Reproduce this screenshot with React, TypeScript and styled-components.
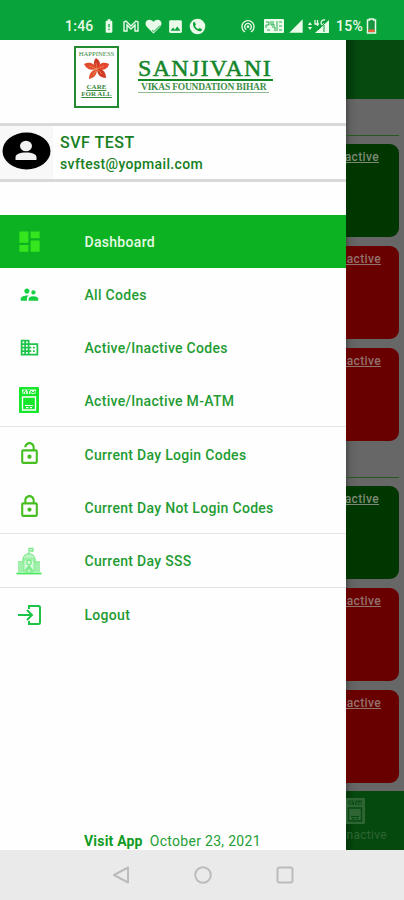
import React from "react";
import styled, { createGlobalStyle } from "styled-components";
import {
  MdDashboard,
  MdSupervisorAccount,
  MdDomain,
  MdOutlineLockOpen,
  MdOutlineLock,
  MdWifiTethering,
  MdImage,
  MdSignalCellular4Bar,
  MdBatteryAlert,
} from "react-icons/md";

const GlobalStyle = createGlobalStyle`
  * { box-sizing: border-box; }
  body { margin: 0; background: #fff; font-family: Roboto, "Liberation Sans", sans-serif; }
`;

const Phone = styled.div`
  width: 404px;
  height: 900px;
  display: grid;
  grid-template-rows: 39.5px 810.5px 50px;
  overflow: hidden;
`;

const StatusBar = styled.header`
  background: #09a33b;
  color: #e9fbe9;
  display: flex;
  align-items: center;
  padding: 13px 0 0 65px;
  svg { display: block; flex: none; }
`;
const StatusText = styled.span<{ $w: number }>`
  display: block;
  width: ${(p) => p.$w}px;
  font-size: 14px;
  font-weight: 500;
  line-height: 16px;
  letter-spacing: 0.25px;
  white-space: nowrap;
`;
const StatusIcon = styled.span<{ $gap: number }>`
  margin-left: ${(p) => p.$gap}px;
`;

const Main = styled.main`
  display: flex;
  min-height: 0;
`;
const Drawer = styled.aside`
  width: 346px;
  flex: none;
  background: #fefefe;
  display: flex;
  flex-direction: column;
`;
const Brand = styled.div`
  height: 83px;
  display: flex;
  padding: 6px 0 0 74px;
  gap: 19px;
`;
const Emblem = styled.div`
  width: 45px;
  height: 62px;
  border: 2px solid #238a32;
  display: flex;
  flex-direction: column;
  align-items: center;
  font-family: "Liberation Serif", serif;
  color: #3b8a42;
  svg { display: block; margin-top: 1px; }
`;
const EmblemText = styled.span`
  font-size: 6.7px;
  line-height: 7px;
  margin-top: 2px;
  white-space: nowrap;
`;
const Motto = styled.span`
  margin-top: 3px;
  font-size: 7px;
  line-height: 7px;
  text-align: center;
  text-decoration: underline;
  white-space: nowrap;
  font-weight: bold;
`;
const Wordmark = styled.div`
  padding-top: 9px;
  width: 135px;
  font-family: "Liberation Serif", serif;
  color: #14862a;
  white-space: nowrap;
`;
const BrandName = styled.div`
  font-size: 24px;
  line-height: 26px;
  height: 26px;
  letter-spacing: 1.3px;
  border-bottom: 2px solid #14862a;
  -webkit-text-stroke: 0.5px #14862a;
`;
const BrandSub = styled.div`
  font-size: 9.5px;
  font-weight: bold;
  line-height: 12px;
  height: 12px;
  width: 131px;
  padding-left: 3px;
  letter-spacing: -0.22px;
  color: #3f8e48;
  border-bottom: 1px solid #8dba90;
`;

const Profile = styled.section`
  height: 59.5px;
  border: solid #d9d9d9;
  border-width: 3px 0;
  display: flex;
`;
const AvatarBox = styled.div`
  width: 53px;
  background: #f8f8f8;
  display: flex;
  align-items: flex-start;
  justify-content: center;
  padding-top: 6px;
  svg { display: block; }
`;
const Person = styled.div`
  padding: 6px 0 0 7px;
  font-weight: 500;
  color: #17801f;
  white-space: nowrap;
`;
const PersonName = styled.div`
  font-size: 16px;
  line-height: 22px;
  letter-spacing: 0.5px;
`;
const PersonMail = styled.div`
  font-size: 14px;
  line-height: 21px;
  letter-spacing: 0.34px;
`;

const Menu = styled.nav`
  margin-top: 32.5px;
`;
const Item = styled.div<{ $active?: boolean; $ruled?: boolean }>`
  height: ${(p) => (p.$ruled ? 53.9 : 53)}px;
  display: grid;
  grid-template-columns: 58px 1fr;
  align-items: center;
  background: ${(p) => (p.$active ? "#0db222" : "transparent")};
  color: ${(p) => (p.$active ? "#e4f9e4" : "#1f9c33")};
  border-bottom: ${(p) => (p.$ruled ? "1px solid #e3e5e5" : "0")};
`;
const ItemIcon = styled.span<{ $color: string }>`
  display: flex;
  justify-content: center;
  color: ${(p) => p.$color};
  svg { display: block; }
`;
const Label = styled.span`
  padding: 1.5px 0 0 26.5px;
  font-size: 14px;
  font-weight: 500;
  letter-spacing: 0.3px;
  white-space: nowrap;
`;
const Footer = styled.footer`
  margin-top: auto;
  height: 18px;
  padding-left: 84px;
  display: flex;
  gap: 7px;
  font-size: 14px;
  line-height: 18px;
  letter-spacing: 0.3px;
  color: #259e36;
  white-space: nowrap;
  b { font-weight: 700; letter-spacing: 0.2px; color: #0f9b22; }
`;

const Dimmed = styled.section`
  flex: 1;
  min-width: 0;
  overflow: hidden;
  background: linear-gradient(90deg, #4b4b4b 0, #606060 4px, #676767 12px);
  display: flex;
  flex-direction: column;
`;
const AppHeader = styled.div`
  height: 59px;
  flex: none;
  background: linear-gradient(90deg, #033509 0, #064a10 12px);
`;
const Section = styled.div<{ $top: number }>`
  margin-top: ${(p) => p.$top}px;
  width: 53px;
  border-top: 1px solid #25591f;
  padding-top: 8px;
  display: flex;
  flex-direction: column;
  gap: 9px;
`;
const Card = styled.div<{ $on?: boolean }>`
  height: 93px;
  border-radius: 0 9px 9px 0;
  background: ${(p) => (p.$on ? "#003600" : "#690000")};
  color: ${(p) => (p.$on ? "#7b8a76" : "#92706c")};
  padding: 5px ${(p) => (p.$on ? 20 : 18)}px 0 0;
  display: flex;
  justify-content: flex-end;
  overflow: hidden;
  font-size: 12px;
  letter-spacing: 0.35px;
  line-height: 17px;
  font-weight: 500;
  text-decoration: underline;
`;
const Tabs = styled.div`
  margin-top: auto;
  height: 59px;
  flex: none;
  background: linear-gradient(90deg, #033709 0, #05490e 9px);
  color: #2f6535;
  font-size: 12px;
  line-height: 18px;
  letter-spacing: 0.3px;
  white-space: nowrap;
  padding-top: 7px;
  svg { display: block; margin-left: -1px; }
`;
const TabLabel = styled.div`
  display: flex;
  justify-content: flex-end;
  width: 41px;
  padding-top: 2px;
`;

const NavBar = styled.div`
  background: #eaeaea;
  display: flex;
  justify-content: center;
  align-items: center;
  gap: 64px;
  padding: 0 0 0 2px;
  svg { display: block; }
`;

const Gmail = () => (
  <svg width="16" height="12" viewBox="0 0 16 12" fill="none" stroke="currentColor" strokeWidth="1.4">
    <path d="M1 11V2l2-1 5 5 5-5 2 1v9h-3V5L8 9 4 5v6z" />
  </svg>
);
const Heart = () => (
  <svg width="17" height="15" viewBox="0 0 17 15">
    <path fill="currentColor" d="M8.5 14.5 2 8C-1 4.5 1 .8 4.5.8c1.8 0 3.2.9 4 2.3.8-1.4 2.2-2.3 4-2.3C16 .8 18 4.5 15 8z" />
    <path d="M7 11.500l2 1 6-6" fill="none" stroke="#09a33b" strokeWidth="1" />
  </svg>
);
const Phoned = () => (
  <svg width="17" height="17" viewBox="0 0 17 17">
    <circle cx="8.5" cy="8.5" r="7.8" fill="currentColor" />
    <path d="M5.5 3.8 7 6.4 6 7.8c.7 1.6 1.8 2.6 3.2 3.3l1.3-1.2 2.6 1.4c-.3 1.8-1.6 2.3-3 1.9-3.3-.9-5.8-3.7-6.1-6.6-.1-1.4.4-2.5 1.5-2.8z" fill="#09a33b" />
  </svg>
);
const VoLte = () => (
  <svg width="20" height="14" viewBox="0 0 20 14">
    <rect width="20" height="14" rx="1" fill="currentColor" />
    <path d="M2 3h3v3H2v3M7 2v4h4M9 2v4M3 11h3M8 8h3v4M13 2v10M15 3h3M15 7h3M15 11h3" fill="none" stroke="#2aad50" strokeWidth="1" />
  </svg>
);
const MobileData = () => (
  <svg width="22" height="16" viewBox="0 0 22 16">
    <path d="M0 7l2-3 2 3zM0 9l2 3 2-3z" fill="currentColor" />
    <path d="M21 2v13H7z" fill="currentColor" />
    <path d="M7 2v4h4M9.500 2v6M17 2c-5-1-5 6-1 5V5" fill="none" stroke="currentColor" strokeWidth="1.3" />
    <path d="M10 12l7-7M16 7v7" stroke="#09a33b" strokeWidth="1" />
  </svg>
);
const Battery = () => (
  <svg width="11" height="16" viewBox="0 0 11 16">
    <path d="M3.500 2V1h4v1h2v13h-8V2z" fill="#189443" stroke="currentColor" strokeWidth="1.5" />
    <path d="M2.500 11.500h6V14h-6z" fill="#ef6037" />
  </svg>
);
const Flower = () => (
  <svg width="28" height="23" viewBox="0 0 28 23">
    <path fill="#cf3a28" d="M14 11C10 8 10 3 13 0c5 3 5 7 1 11z" />
    <path fill="#e4472d" d="M14 11c1-5 6-8 12-5-1 5-6 7-12 5z" />
    <path fill="#d23c25" d="M14 11c6-1 9 4 9 9-6 0-9-4-9-9z" />
    <path fill="#e1532f" d="M14 11c0 6-3 9-8 10 0-6 3-9 8-10z" />
    <path fill="#df4b2c" d="M14 11C8 13 3 11 1 6c6-3 11 0 13 5z" />
    <path d="M13 5l1 6 7-3m-7 3 5 5m-5-5-4 6m4-6L6 8" fill="none" stroke="#f0a060" strokeWidth=".6" />
  </svg>
);
const Avatar = () => (
  <svg width="49" height="38" viewBox="0 0 49 38">
    <ellipse cx="24.500" cy="19" rx="24" ry="18.500" fill="#000" />
    <ellipse cx="24" cy="14" rx="6" ry="5.300" fill="#f2f2f2" />
    <path d="M13.500 28v-2.500c0-3.500 4-5 10.500-5s10.500 1.500 10.500 5V28z" fill="#f2f2f2" />
  </svg>
);
const Atm = ({ accent = "#fff" }: { accent?: string }) => (
  <svg width="20" height="26" viewBox="0 0 20 26">
    <rect width="20" height="26" rx="1" fill="currentColor" />
    <path d="M3 2.500h14v4.500H3z" fill={accent} opacity=".85" />
    <path d="M3.500 7l2-4 1.500 4M8 3.500h3M9.500 3.500V7M12 7V4l2 2 2-2v3" fill="none" stroke="currentColor" strokeWidth="1" />
    <path d="M3.500 10h13v13h-13z" fill="none" stroke={accent} strokeWidth="1.300" />
    <path d="M6 18.500h8M7 20.700h2.500M11 20.700h2" stroke={accent} strokeWidth="1.200" />
  </svg>
);
const Capitol = () => (
  <svg width="26" height="28" viewBox="0 0 26 28" fill="none" stroke="currentColor">
    <path d="M13 7V1.500h4V4h-3" strokeWidth="1.300" />
    <path d="M7 12c0-7 12-7 12 0z" fill="currentColor" fillOpacity=".5" />
    <path d="M7 12v13M19 12v13M2 15h5M19 15h5M3 16v9M23 16v9M5 16v9M21 16v9" strokeWidth="1.400" />
    <path d="M8 13h10v12H8z" fill="currentColor" fillOpacity=".3" strokeWidth=".8" />
    <circle cx="13" cy="15.500" r="2.300" strokeWidth="1.200" />
    <path d="M9 24l4-5 4 5M11 25v-3h4v3" strokeWidth="1.300" />
    <path d="M.5 26.500h25" stroke="#45e85a" strokeWidth="1.800" />
  </svg>
);
const Exit = () => (
  <svg width="24" height="22" viewBox="0 0 24 22" fill="none" stroke="currentColor" strokeWidth="2">
    <path d="M1 11h13.500M10 6l5 5-5 5M12 5V2h9.500q1.500 0 1.500 1.500v15Q23 20 21.500 20H12v-3" />
  </svg>
);

const items = [
  { label: "Dashboard", icon: <MdDashboard size={27} />, color: "#35e51e", active: true },
  { label: "All Codes", icon: <MdSupervisorAccount size={21} />, color: "#17cf43" },
  { label: "Active/Inactive Codes", icon: <MdDomain size={21} />, color: "#1dc449" },
  { label: "Active/Inactive M-ATM", icon: <Atm />, color: "#16e72b", ruled: true },
  { label: "Current Day Login Codes", icon: <MdOutlineLockOpen size={25} />, color: "#45bf20" },
  { label: "Current Day Not Login Codes", icon: <MdOutlineLock size={25} />, color: "#45bf20", ruled: true },
  { label: "Current Day SSS", icon: <Capitol />, color: "#78ea87", ruled: true },
  { label: "Logout", icon: <Exit />, color: "#1bc447" },
];

export default function App() {
  return (
    <>
      <GlobalStyle />
      <Phone>
        <StatusBar>
          <StatusText $w={29}>1:46</StatusText>
          <StatusIcon $gap={7}><MdBatteryAlert size={16} /></StatusIcon>
          <StatusIcon $gap={6}><Gmail /></StatusIcon>
          <StatusIcon $gap={6}><Heart /></StatusIcon>
          <StatusIcon $gap={5}><MdImage size={17} /></StatusIcon>
          <StatusIcon $gap={5}><Phoned /></StatusIcon>
          <StatusIcon $gap={34}><MdWifiTethering size={16} /></StatusIcon>
          <StatusIcon $gap={8}><VoLte /></StatusIcon>
          <StatusIcon $gap={4}><MdSignalCellular4Bar size={16} /></StatusIcon>
          <StatusIcon $gap={4}><MobileData /></StatusIcon>
          <StatusIcon $gap={6}><StatusText $w={27}>15%</StatusText></StatusIcon>
          <StatusIcon $gap={3}><Battery /></StatusIcon>
        </StatusBar>
        <Main>
          <Drawer>
            <Brand>
              <Emblem>
                <EmblemText>HAPPINESS</EmblemText>
                <Flower />
                <Motto>CARE<br />FOR ALL</Motto>
              </Emblem>
              <Wordmark>
                <BrandName>SANJIVANI</BrandName>
                <BrandSub>VIKAS FOUNDATION BIHAR</BrandSub>
              </Wordmark>
            </Brand>
            <Profile>
              <AvatarBox><Avatar /></AvatarBox>
              <Person>
                <PersonName>SVF TEST</PersonName>
                <PersonMail>svftest@yopmail.com</PersonMail>
              </Person>
            </Profile>
            <Menu>
              {items.map((i) => (
                <Item key={i.label} $active={i.active} $ruled={i.ruled}>
                  <ItemIcon $color={i.color}>{i.icon}</ItemIcon>
                  <Label>{i.label}</Label>
                </Item>
              ))}
            </Menu>
            <Footer><b>Visit App</b><span>October 23, 2021</span></Footer>
          </Drawer>
          <Dimmed>
            <AppHeader />
            <Section $top={36.2}>
              <Card $on>Inactive</Card>
              <Card>Inactive</Card>
              <Card>Inactive</Card>
            </Section>
            <Section $top={36.7}>
              <Card $on>Inactive</Card>
              <Card>Inactive</Card>
              <Card>Inactive</Card>
            </Section>
            <Tabs>
              <Atm accent="#05490e" />
              <TabLabel>Inactive</TabLabel>
            </Tabs>
          </Dimmed>
        </Main>
        <NavBar>
          <svg width="18" height="18" viewBox="0 0 18 18" fill="none" stroke="#bcbcbc" strokeWidth="2"><path d="M16 1.500v15L2 9z" strokeLinejoin="round" /></svg>
          <svg width="18" height="18" viewBox="0 0 18 18" fill="none" stroke="#bcbcbc" strokeWidth="2"><circle cx="9" cy="9" r="7.800" /></svg>
          <svg width="18" height="18" viewBox="0 0 18 18" fill="none" stroke="#bcbcbc" strokeWidth="2"><rect x="1.500" y="1.500" width="15" height="15" rx="2" /></svg>
        </NavBar>
      </Phone>
    </>
  );
}
